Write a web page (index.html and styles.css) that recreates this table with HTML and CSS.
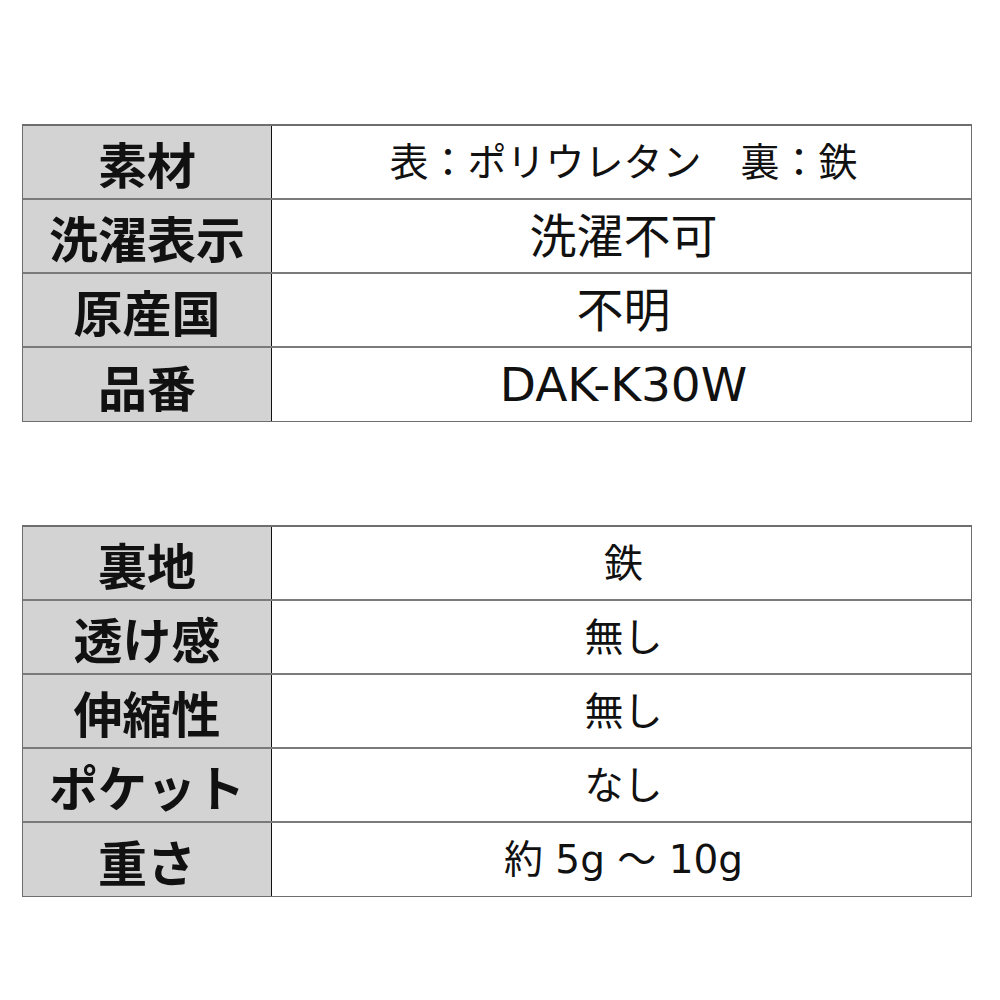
FILE: index.html
```html
<!DOCTYPE html>
<html lang="ja">
<head>
<meta charset="utf-8">
<link rel="stylesheet" href="styles.css">
</head>
<body>
<div class="page">
  <div class="spec">
    <div class="row">
      <div class="label">素材</div>
      <div class="value sm">表：ポリウレタン　裏：鉄</div>
    </div>
    <div class="row">
      <div class="label">洗濯表示</div>
      <div class="value lg">洗濯不可</div>
    </div>
    <div class="row">
      <div class="label">原産国</div>
      <div class="value lg">不明</div>
    </div>
    <div class="row">
      <div class="label">品番</div>
      <div class="value lg">DAK-K30W</div>
    </div>
  </div>

  <div class="spec">
    <div class="row">
      <div class="label">裏地</div>
      <div class="value sm">鉄</div>
    </div>
    <div class="row">
      <div class="label">透け感</div>
      <div class="value sm">無し</div>
    </div>
    <div class="row">
      <div class="label">伸縮性</div>
      <div class="value sm">無し</div>
    </div>
    <div class="row">
      <div class="label">ポケット</div>
      <div class="value sm">なし</div>
    </div>
    <div class="row">
      <div class="label">重さ</div>
      <div class="value sm">約 5g ～ 10g</div>
    </div>
  </div>
</div>
</body>
</html>
```
FILE: styles.css
```css
html, body {
  margin: 0;
  padding: 0;
  background: #ffffff;
}

.page {
  padding: 124px 0 0 22px;
  display: flex;
  flex-direction: column;
  gap: 103px;
  font-family: "DejaVu Sans", "Noto Sans CJK JP", sans-serif;
  color: #111111;
}

.spec {
  width: 950px;
  box-sizing: border-box;
  border: 1px solid #6e6e6e;
  border-top-width: 2px;
  display: flex;
  flex-direction: column;
}

.row {
  display: grid;
  grid-template-columns: 249px 1fr;
  height: 74px;
  border-bottom: 2px solid #7a7a7a;
  box-sizing: border-box;
}

.row:last-child {
  border-bottom: none;
  height: 73px;
}

.label {
  background: #d3d3d3;
  border-right: 1px solid #111111;
  display: flex;
  align-items: center;
  justify-content: center;
  font-family: "Noto Sans CJK JP", sans-serif;
  font-weight: 700;
  font-size: 49px;
  line-height: 1;
  padding-top: 1px;
  box-sizing: border-box;
}

.value {
  display: flex;
  align-items: center;
  justify-content: center;
  line-height: 1;
  white-space: pre;
  font-weight: 400;
  padding-left: 4px;
}

.value.sm {
  font-size: 39px;
}

.value.lg {
  font-size: 47px;
}
```
